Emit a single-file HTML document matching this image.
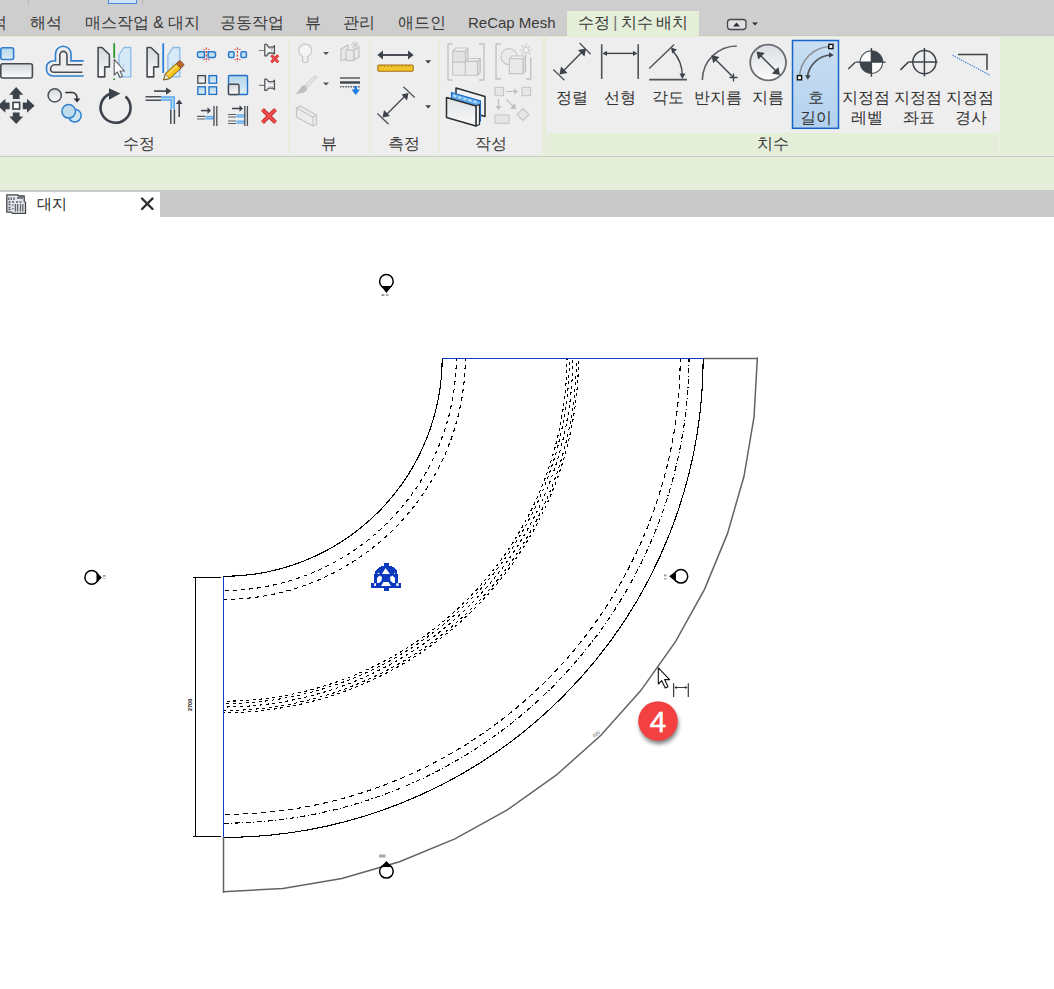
<!DOCTYPE html>
<html><head><meta charset="utf-8">
<style>
*{margin:0;padding:0;box-sizing:border-box}
html,body{width:1054px;height:989px;overflow:hidden;background:#fff;font-family:"Liberation Sans",sans-serif;color:#333}
.abs{position:absolute}
#top{left:0;top:0;width:1054px;height:36px;background:#cecece;border-bottom:1px solid #c8c8c8}
.tab{position:absolute;top:12.5px;font-size:15.6px;color:#3a3a3a;white-space:nowrap;line-height:20px}
#ribbon{left:0;top:36px;width:1054px;height:120px;background:#e4eed8}
.panel{position:absolute;top:1px;height:118px;background:#eeeeee}
.ptitle{position:absolute;font-size:15.5px;color:#3c3c3c;white-space:nowrap;line-height:18px;width:100px;text-align:center}
#rline{left:0;top:156px;width:1054px;height:1px;background:#cbcbcb}
#opts{left:0;top:157px;width:1054px;height:33px;background:#e4eed8}
#tabbar{left:0;top:190px;width:1054px;height:27px;background:#cacaca}
#doctab{left:0;top:192px;width:160px;height:25px;background:#fff}
.bt{position:absolute;font-size:15.5px;color:#333;white-space:nowrap;line-height:20px;text-align:center;width:60px}
</style></head>
<body>
<div id="top" class="abs">
  <div class="abs" style="left:28px;top:0;width:1px;height:5px;background:#b8b8b8"></div>
  <div class="abs" style="left:108px;top:0;width:29px;height:4px;background:#cfe3f7;border:1px solid #4a8ad6;border-top:none"></div>
  <div class="abs" style="left:142px;top:0;width:1px;height:5px;background:#b8b8b8"></div>
  <div class="tab" style="left:-9px">석</div>
  <div class="tab" style="left:30px">해석</div>
  <div class="tab" style="left:85px">매스작업 &amp; 대지</div>
  <div class="tab" style="left:220px">공동작업</div>
  <div class="tab" style="left:305px">뷰</div>
  <div class="tab" style="left:343px">관리</div>
  <div class="tab" style="left:398px">애드인</div>
  <div class="tab" style="left:468px;font-size:15px">ReCap Mesh</div>
  <div class="abs" style="left:567px;top:11px;width:132px;height:25px;background:#e4eed8"></div>
  <div class="tab" style="left:578px;letter-spacing:-0.35px">수정 <span style="color:#6e6e6e">|</span> 치수 배치</div>
</div>
<div id="ribbon" class="abs">
  <div class="panel" style="left:0;width:288px"></div>
  <div class="panel" style="left:289px;width:80px"></div>
  <div class="panel" style="left:370px;width:69px"></div>
  <div class="panel" style="left:440px;width:102px"></div>
  <div class="panel" style="left:546px;width:1px;background:#ececec"></div>
  <div class="panel" style="left:547px;width:453px;height:96px"></div>
  <div class="panel" style="left:999px;top:97px;width:1px;height:22px;background:#eaf0e2"></div>
  <div class="ptitle" style="left:88.7px;top:99px">수정</div>
  <div class="ptitle" style="left:279.2px;top:99px">뷰</div>
  <div class="ptitle" style="left:353.9px;top:99px">측정</div>
  <div class="ptitle" style="left:440.5px;top:99px">작성</div>
  <div class="ptitle" style="left:723px;top:99px">치수</div>
</div>
<div id="rline" class="abs"></div>
<div id="opts" class="abs"></div>
<div id="tabbar" class="abs"></div>
<div id="doctab" class="abs">
  <div class="abs" style="left:37px;top:2px;font-size:15px;color:#222;line-height:20px">대지</div>
</div>
<svg class="abs" style="left:0;top:0" width="1054" height="220" viewBox="0 0 1054 220">
 <defs>
  <linearGradient id="gg" x1="0" y1="0" x2="0" y2="1"><stop offset="0" stop-color="#d3d7dc"/><stop offset="1" stop-color="#fbfbfb"/></linearGradient>
  <linearGradient id="bg" x1="0" y1="0" x2="0" y2="1"><stop offset="0" stop-color="#b3d6ea"/><stop offset="1" stop-color="#dcedf7"/></linearGradient>
  <linearGradient id="selg" x1="0" y1="0" x2="0" y2="1"><stop offset="0" stop-color="#c4dcf3"/><stop offset="1" stop-color="#b5d3ef"/></linearGradient>
  <linearGradient id="dg" x1="0" y1="0" x2="0" y2="1"><stop offset="0" stop-color="#dfe1e4"/><stop offset="1" stop-color="#fafafa"/></linearGradient>
 </defs>
 <!-- Icon1 align (cut) -->
 <rect x="0.8" y="47.8" width="12.8" height="11.7" rx="2" fill="url(#bg)" stroke="#2f7fd0" stroke-width="1.6"/>
 <rect x="0.8" y="63.8" width="31.6" height="14.2" rx="2" fill="url(#gg)" stroke="#454a50" stroke-width="1.6"/>
 <!-- Icon2 offset -->
 <path d="M83.7 60.9 H71 V54 A7.7 7.7 0 0 0 55.5 54 V61 H53 A6.5 6.5 0 0 0 46.5 67.5 V69.5 A6.5 6.5 0 0 0 53 76 H83.7" fill="none" stroke="#2f7fd0" stroke-width="1.6"/>
 <path d="M82.4 64.8 H67 V55 A3.6 3.6 0 0 0 59.8 55 V64.8 H55 A4.5 4.5 0 0 0 50.5 69 A3.5 3.5 0 0 0 54 72.3 H82.4" fill="none" stroke="#4a4e55" stroke-width="1.6"/>
 <!-- Icon3 mirror pick -->
 <path d="M98.1 47.5 H102 L109.4 54.6 V66.9 H104.7 V76.9 H98.1 Z" fill="url(#gg)" stroke="#474b52" stroke-width="1.6" stroke-linejoin="round"/>
 <path d="M130.8 47.5 H124 L118.9 55 V76.9 H130.8 Z" fill="#d6e9f6" stroke="#8bbbe8" stroke-width="1.3" stroke-linejoin="round"/><path d="M123.7 63.5 V67" stroke="#a8ccee" stroke-width="1"/>
 <path d="M114.2 43.2 V58" stroke="#2e9a2e" stroke-width="1.8"/>
 <circle cx="114.2" cy="79.3" r="1" fill="#2e9a2e"/>
 <path d="M114.2 59.3 V75 L117.4 72 L120 77.5 L122.5 76.3 L120 71 H124.5 Z" fill="#fdfdfd" stroke="#5b5f66" stroke-width="1.1" stroke-linejoin="round"/>
 <!-- Icon7 mirror draw -->
 <path d="M147.1 47.5 H151 L158.4 54.6 V66.9 H153.7 V76.9 H147.1 Z" fill="url(#gg)" stroke="#474b52" stroke-width="1.6" stroke-linejoin="round"/>
 <path d="M179.8 47.5 H173 L167.9 55 V76.9 H179.8 Z" fill="#d6e9f6" stroke="#8bbbe8" stroke-width="1.3" stroke-linejoin="round"/><path d="M172.7 63.5 V67" stroke="#a8ccee" stroke-width="1"/>
 <path d="M163.2 43.2 V73" stroke="#2a7fdc" stroke-width="1.8"/>
 <g transform="translate(163.5,80) rotate(-43)">
  <path d="M0 0 L5.5 -3.3 H21 V3.3 H5.5 Z" fill="#f6c21a" stroke="#6d5a20" stroke-width="0.9"/>
  <path d="M6 -1 H20.5" stroke="#fbe27a" stroke-width="1.2"/>
  <path d="M0.6 0 L5.5 -3 V3 Z" fill="#f4efe0" stroke="#6d5a20" stroke-width="0.6"/>
  <rect x="20.5" y="-3.3" width="5" height="6.6" rx="1.2" fill="#b9652c" stroke="#7a4a25" stroke-width="0.8"/>
 </g>
 <!-- Icon4 move -->
 <g fill="#3d434a">
  <path d="M16.2 87 L23.2 94.7 H19.6 V99 H12.8 V94.7 H9.2 Z"/>
  <path d="M16.2 124.1 L23.2 116.4 H19.6 V112.5 H12.8 V116.4 H9.2 Z"/>
  <path d="M34.6 105.8 L27 98.8 V102.4 H22.8 V109.2 H27 V112.8 Z"/>
  <path d="M-2.2 105.8 L5.4 98.8 V102.4 H9.6 V109.2 H5.4 V112.8 Z"/>
 </g>
 <rect x="13" y="102.4" width="6.6" height="6.6" fill="#fff" stroke="#3d434a" stroke-width="1.6"/>
 <!-- Icon5 copy -->
 <circle cx="54.7" cy="95.4" r="6.6" fill="url(#gg)" stroke="#4a4e55" stroke-width="1.5"/>
 <path d="M65.3 92.5 H72 A5 5 0 0 1 77 97.5 V99" fill="none" stroke="#2b2f35" stroke-width="1.5"/>
 <path d="M73.5 98.5 H80.5 L77 102.5 Z" fill="#2b2f35"/>
 <circle cx="74.7" cy="115.6" r="6.4" fill="#cfe5f2" stroke="#2f7fd0" stroke-width="1.5"/>
 <circle cx="68.7" cy="111.3" r="6.8" fill="#c0dcec" stroke="#2f7fd0" stroke-width="1.5"/>
 <!-- Icon6 rotate -->
 <path d="M125.5 96.5 A15 15 0 1 1 109.5 94" fill="none" stroke="#3d434a" stroke-width="2.6"/>
 <path d="M109 88.3 V99.7 L120.4 93.5 Z" fill="#3d434a"/>
 <!-- Icon8 trim corner -->
 <path d="M145.5 96.8 H161 M145.5 100.2 H161" stroke="#4a4e55" stroke-width="1.6"/>
 <path d="M161 98.5 H172.7 V109" fill="none" stroke="#5aa8f0" stroke-width="4.5"/>
 <path d="M161 98.5 H172.7 V109" fill="none" stroke="#b0d8ee" stroke-width="1.6"/>
 <path d="M170.8 109.5 V124 M174.4 109.5 V124" stroke="#4a4e55" stroke-width="1.5"/>
 <path d="M154 91.1 H167" stroke="#3d434a" stroke-width="1.6"/>
 <path d="M166 87.5 L171.5 91.1 L166 94.7 Z" fill="#3d434a"/>
 <path d="M179.2 117 V103" stroke="#3d434a" stroke-width="1.5"/>
 <path d="M175.8 104 L179.2 99.5 L182.6 104 Z" fill="#3d434a"/>
 <!-- Small icons col1 -->
 <path d="M204.4 51.8 H199.5 A2 2 0 0 0 197.5 53.8 V55.4 A2 2 0 0 0 199.5 57.4 H204.4 Z M208.2 51.8 H213.5 A2 2 0 0 1 215.5 53.8 V55.4 A2 2 0 0 1 213.5 57.4 H208.2 Z" fill="#c2e2f2" stroke="#2a78cc" stroke-width="1.5"/>
 <path d="M206.3 47.5 V62" stroke="#d02a2a" stroke-width="1.1" stroke-dasharray="2 1.5"/>
 <path d="M203.2 49.4 H204.8 M207.8 49.4 H209.6 M203.2 59.6 H204.8 M207.8 59.6 H209.6" stroke="#d84a4a" stroke-width="0.9"/>
 <rect x="197.8" y="75.6" width="7.6" height="7.6" fill="url(#gg)" stroke="#454a50" stroke-width="1.3"/>
 <rect x="209" y="75.6" width="7.6" height="7.6" fill="url(#bg)" stroke="#2070c8" stroke-width="1.3"/>
 <rect x="197.8" y="86.8" width="7.6" height="7.6" fill="url(#bg)" stroke="#2070c8" stroke-width="1.3"/>
 <rect x="209" y="86.8" width="7.6" height="7.6" fill="url(#bg)" stroke="#2070c8" stroke-width="1.3"/>
 <path d="M201 110.6 H208" stroke="#3d434a" stroke-width="1.5"/>
 <path d="M207.5 107.3 L211 110.6 L207.5 113.9 Z" fill="#3d434a"/>
 <path d="M197 116.4 H205 M197 119 H205" stroke="#5a5e64" stroke-width="1.2"/>
 <path d="M205.5 117.7 H214" stroke="#5aa8f0" stroke-width="3.6"/><path d="M206 117.7 H213.5" stroke="#a8d4f2" stroke-width="1"/>
 <path d="M214 106 V126 M216.8 106 V126" stroke="#4a4e55" stroke-width="1.3"/>
 <!-- col2 -->
 <rect x="228.6" y="51.8" width="5.4" height="5.6" rx="1.2" fill="#c2e2f2" stroke="#2a78cc" stroke-width="1.5"/>
 <rect x="241" y="51.8" width="5.4" height="5.6" rx="1.2" fill="#c2e2f2" stroke="#2a78cc" stroke-width="1.5"/>
 <path d="M237.4 47.5 V62" stroke="#d02a2a" stroke-width="1.1" stroke-dasharray="2 1.5"/>
 <path d="M234.3 49.4 H235.9 M238.9 49.4 H240.7 M234.3 59.6 H235.9 M238.9 59.6 H240.7" stroke="#d84a4a" stroke-width="0.9"/>
 <rect x="228.5" y="75.5" width="19" height="19" rx="1" fill="url(#bg)" stroke="#2070c8" stroke-width="1.4"/>
 <rect x="228.5" y="84.3" width="10.5" height="10.2" rx="1" fill="url(#gg)" stroke="#454a50" stroke-width="1.4"/>
 <path d="M232 108.5 H240" stroke="#3d434a" stroke-width="1.5"/>
 <path d="M239.5 105.2 L243 108.5 L239.5 111.8 Z" fill="#3d434a"/>
 <path d="M228 114.5 H236 M228 117 H236 M228 121 H236 M228 123.5 H236" stroke="#5a5e64" stroke-width="1.1"/>
 <path d="M236.5 115.8 H245 M236.5 122.2 H245" stroke="#5aa8f0" stroke-width="3.2"/><path d="M237 115.8 H244.5 M237 122.2 H244.5" stroke="#a8d4f2" stroke-width="0.9"/>
 <path d="M244.8 106 V126 M247.4 106 V126" stroke="#4a4e55" stroke-width="1.3"/>
 <!-- col3 pins -->
 <path d="M259 50.5 H264.8 M259 85.3 H264.8" stroke="#7a7e84" stroke-width="1.2"/>
 <path d="M264.8 44.4 H266.6 L268.6 47.1 H273 L274.4 45.6 V54 L273 53 H268.6 L266.6 55.8 H264.8 Z" fill="#f4f4f4" stroke="#50545a" stroke-width="1.3" stroke-linejoin="round"/>
 <path d="M268.6 48.5 H273 M271.8 48 V52.5" stroke="#b5b8bc" stroke-width="1"/>
 <path d="M271.3 55.3 L278.2 62.2 M278.2 55.3 L271.3 62.2" stroke="#c83030" stroke-width="3"/>
 <path d="M271.3 55.3 L278.2 62.2 M278.2 55.3 L271.3 62.2" stroke="#ec4a4a" stroke-width="1.8"/>
 <path d="M264.8 79.2 H266.6 L268.6 81.6 H273 L274.4 80.2 V89.6 L273 88.1 H268.6 L266.6 90.4 H264.8 Z" fill="#f4f4f4" stroke="#50545a" stroke-width="1.3" stroke-linejoin="round"/>
 <path d="M268.6 83 H273 M268.6 86.8 H273" stroke="#b5b8bc" stroke-width="1"/>
 <path d="M262.5 109.5 L275.5 122.5 M275.5 109.5 L262.5 122.5" stroke="#c42a2a" stroke-width="4"/>
 <path d="M262.5 109.5 L275.5 122.5 M275.5 109.5 L262.5 122.5" stroke="#f25050" stroke-width="2.4"/>
 <!-- View panel (disabled) -->
 <circle cx="305.2" cy="50.6" r="6.5" fill="#f4f4f4" stroke="#c8c8c8" stroke-width="1.2"/>
 <path d="M302.6 56 V61.5 Q305.2 63.5 307.8 61.5 V56" fill="#f0f0f0" stroke="#c4c4c4" stroke-width="1.1"/>
 <path d="M323 52 H329 L326 55 Z M323 82.6 H329 L326 85.6 Z" fill="#555"/>
 <g fill="#e8e8e8" stroke="#c0c0c0" stroke-width="1.1">
  <path d="M341 49 L348 45 V58 L341 61 Z"/>
  <rect x="346" y="50" width="8" height="10.5"/>
  <path d="M354 50 L359 47 V57 L354 60 Z"/>
 </g>
 <path d="M355 41 V49 M351 45 H359 M352 42 L358 48 M358 42 L352 48" stroke="#c8c8c8" stroke-width="1"/>
 <path d="M295.5 93.5 Q298 92 300 89 Q301.5 85.5 304 85 L307.5 88.5 Q307 91 303.5 92.5 Q300 94 295.5 93.5 Z" fill="#bdbdbd"/>
 <path d="M305 85.5 L314 76.5 Q316 75.5 317 77 L308 86.5 Z" fill="#ebebeb" stroke="#c4c4c4" stroke-width="1"/>
 <path d="M340 78 H360" stroke="#5f636a" stroke-width="1.6"/>
 <path d="M340 82.5 H360" stroke="#3d434a" stroke-width="2.4"/>
 <path d="M340 86.8 H360" stroke="#5f636a" stroke-width="1.4" stroke-dasharray="1.6 1"/>
 <path d="M355.7 86 V90" stroke="#1e7ae0" stroke-width="2.6"/>
 <path d="M351.5 89.5 H360 L355.7 95 Z" fill="#1e7ae0"/>
 <g fill="#ececec" stroke="#c4c4c4" stroke-width="1.1">
  <path d="M296.5 108 L300 106 L316.5 115 V124 L313 126 L296.5 117 Z"/>
  <path d="M296.5 108 L313 117 V126 M313 117 L316.5 115" fill="none"/>
 </g>
 <!-- Measure panel -->
 <path d="M381 55 H410" stroke="#4a4e55" stroke-width="2"/>
 <path d="M377.3 55 L383 50.6 V59.4 Z M413.6 55 L408 50.6 V59.4 Z" fill="#3d434a"/>
 <rect x="377.8" y="65" width="35.4" height="6.3" rx="1.2" fill="#f2c42a" stroke="#a66e16" stroke-width="1.1"/>
 <path d="M381 65.5 V67 M384.5 65.5 V67 M388 65.5 V67 M391.5 65.5 V67 M395 65.5 V67 M398.5 65.5 V67 M402 65.5 V67 M405.5 65.5 V67 M409 65.5 V67" stroke="#b07a20" stroke-width="0.8"/>
 <path d="M425.2 60.2 H431.2 L428.2 63.4 Z M425.2 105.3 H431.2 L428.2 108.5 Z" fill="#3d434a"/>
 <path d="M384.5 116.5 L407 94" stroke="#4a4e55" stroke-width="1.5"/>
 <path d="M377.4 113.5 L388.6 124.2 M403.4 86.8 L414.7 97.5" stroke="#4a4e55" stroke-width="1.2"/>
 <path d="M382.5 117.5 L384 110 L390 116 Z M408.5 93 L401.5 94.5 L407 100.5 Z" fill="#3d434a"/>
 <!-- Create panel (disabled mostly) -->
 <g fill="none" stroke="#c2c2c2" stroke-width="1.4">
  <path d="M452.7 44 H448 V80 H452.7 M479 44 H484 V80 H479"/>
  <path d="M501 44 H496 V79 H501 M530.8 57 V79 H526"/>
 </g>
 <g fill="#e9e9e9" stroke="#c4c4c4" stroke-width="1.1" stroke-linejoin="round">
  <path d="M452.7 51.3 L456 48 H468 L465.4 51.3 Z" fill="#f2f2f2"/>
  <path d="M465.4 51.3 L468 48 V59 L465.4 62 Z" fill="#dcdcdc"/>
  <rect x="452.7" y="51.3" width="12.7" height="11" fill="#e2e2e2"/>
  <rect x="452.7" y="62.3" width="12.7" height="13"/>
  <path d="M465.4 61.4 L468.5 58.5 H480.3 L477.5 61.4 Z" fill="#f2f2f2"/>
  <path d="M477.5 61.4 L480.3 58.5 V72.5 L477.5 75.3 Z" fill="#dcdcdc"/>
  <rect x="465.4" y="61.4" width="12.1" height="13.9"/>
 </g>
 <circle cx="509" cy="56.6" r="8" fill="#ebebeb" stroke="#c6c6c6" stroke-width="1.1"/>
 <g fill="#e9e9e9" stroke="#c4c4c4" stroke-width="1.1" stroke-linejoin="round">
  <path d="M509.4 58.8 L512 56 H525.6 L523 58.8 Z" fill="#f2f2f2"/>
  <path d="M523 58.8 L525.6 56 V70.8 L523 73.6 Z" fill="#dcdcdc"/>
  <rect x="509.4" y="58.8" width="13.6" height="14.8"/>
 </g>
 <path d="M526 43.5 V56.5 M519.5 50 H532.5 M521.4 45.4 L530.6 54.6 M530.6 45.4 L521.4 54.6" stroke="#d2d2d2" stroke-width="1.2"/>
 <circle cx="526" cy="50" r="2.6" fill="#f4f4f4" stroke="#cfcfcf" stroke-width="1"/>
 <path d="M456 88 L485 96.5 V116.5 L456 108 Z" fill="#f2f3f5" stroke="#2b2f35" stroke-width="1.5" stroke-linejoin="round"/>
 <path d="M451.5 92.5 L480.5 101 V121 L451.5 112.5 Z" fill="#5aa6ea" stroke="#1a6ac8" stroke-width="1.1"/>
 <path d="M453 95.5 L479 103" stroke="#b8def5" stroke-width="2.2" stroke-dasharray="3.5 1.8"/>
 <path d="M476 106 L479.5 104.5 V124.5 L476 126 Z" fill="#f8f8f8" stroke="#2b2f35" stroke-width="1.3" stroke-linejoin="round"/>
 <path d="M446.5 97.5 L476 106 V126 L446.5 117.5 Z" fill="url(#dg)" stroke="#2b2f35" stroke-width="1.5" stroke-linejoin="round"/>
 <g fill="#e6e6e6" stroke="#c6c6c6" stroke-width="1.1">
  <rect x="495" y="87.3" width="8.6" height="8.4"/>
  <rect x="522" y="87.3" width="8.6" height="8.4"/>
  <rect x="495" y="115" width="14" height="8.3"/>
  <path d="M523 108.5 L529 114.5 L523 120.5 L517 114.5 Z"/>
 </g>
 <path d="M506 91.5 H515 M498.5 99 V107 M506.5 99.5 L513 106" stroke="#bfbfbf" stroke-width="1.2"/>
 <path d="M514 88.5 L518 91.5 L514 94.5 Z M495.5 106 H501.5 L498.5 110 Z M510 108.5 L516 109 L515 103 Z" fill="#bfbfbf"/>
</svg>
<svg class="abs" style="left:0;top:0" width="1054" height="220" viewBox="0 0 1054 220">
 <rect x="792.5" y="40.5" width="46" height="87.8" fill="url(#selg2)" stroke="#1564c8" stroke-width="1.5"/>
 <defs>
  <linearGradient id="selg2" x1="0" y1="0" x2="0" y2="1"><stop offset="0" stop-color="#c8def3"/><stop offset="1" stop-color="#b4d2ee"/></linearGradient>
  <linearGradient id="cg" x1="0" y1="0" x2="0" y2="1"><stop offset="0" stop-color="#dcdee2"/><stop offset="1" stop-color="#fafafa"/></linearGradient>
 </defs>
 <!-- aligned -->
 <path d="M563.5 70.8 L582 52" stroke="#4a4e55" stroke-width="1.5"/>
 <path d="M553.3 69.5 L564.4 80.2 M579.6 43 L590.6 54.2" stroke="#4f535a" stroke-width="1.3"/>
 <path d="M559.5 74.5 L561 66.5 L567.5 73 Z M586 48.5 L578 50 L584.5 56.5 Z" fill="#3d434a"/>
 <!-- linear -->
 <path d="M601.7 44.2 V79 M638.2 44.2 V79" stroke="#4f535a" stroke-width="1.6"/>
 <path d="M604 53.4 H636" stroke="#3d434a" stroke-width="1.4"/>
 <path d="M602.5 53.4 L607 50.8 V56 Z M637.4 53.4 L633 50.8 V56 Z" fill="#3d434a"/>
 <!-- angular -->
 <path d="M649.2 68.6 L674.2 44.4" stroke="#4f535a" stroke-width="1.4"/>
 <path d="M649.2 79.7 H687" stroke="#4f535a" stroke-width="1.8"/>
 <path d="M672 50 A38 38 0 0 1 682.3 77" fill="none" stroke="#3d434a" stroke-width="1.4"/>
 <path d="M671 47.5 L677 49.5 L672.2 53.5 Z M682.4 79 L679.5 73.5 H685.5 Z" fill="#3d434a"/>
 <!-- radial -->
 <path d="M702.3 80 A34.5 34.5 0 0 1 736.8 46" fill="none" stroke="#5d6168" stroke-width="1.6"/>
 <path d="M713 57 L733 77" stroke="#3d434a" stroke-width="1.4"/>
 <path d="M711.5 55.3 L719.5 57 L713.2 63.3 Z" fill="#3d434a"/>
 <path d="M733.5 73.5 V81.5 M729.5 77.5 H737.5" stroke="#3d434a" stroke-width="1.3"/>
 <!-- diameter -->
 <circle cx="768.1" cy="62.5" r="17.9" fill="url(#cg)" stroke="#6a6d72" stroke-width="1.8"/>
 <path d="M759 54 L777 72" stroke="#3d434a" stroke-width="1.4"/>
 <path d="M756.5 51.5 L764.8 53 L758.2 59.5 Z M780 75 L771.8 73.5 L778.4 67 Z" fill="#3d434a"/>
 <!-- arc length -->
 <path d="M799.6 78 A31.5 31.5 0 0 1 830.9 46.5" fill="none" stroke="#8a8d92" stroke-width="1.5"/>
 <path d="M807.5 76 A25 25 0 0 1 831 55" fill="none" stroke="#4f535a" stroke-width="1.6"/>
 <path d="M833.8 55 L829 52.2 V57.8 Z M807.8 79.8 L805 75.2 H810.6 Z" fill="#3d434a"/>
 <rect x="797.4" y="75.6" width="4.2" height="4.2" fill="#fff" stroke="#111" stroke-width="1.4"/>
 <rect x="828.8" y="44.4" width="4.2" height="4.2" fill="#fff" stroke="#111" stroke-width="1.4"/>
 <!-- spot elevation -->
 <circle cx="871.4" cy="62.1" r="11.3" fill="#fbfbfb" stroke="#5a5e64" stroke-width="1.2"/>
 <path d="M871.4 62.1 V50.8 A11.3 11.3 0 0 1 882.7 62.1 Z M871.4 62.1 V73.4 A11.3 11.3 0 0 1 860.1 62.1 Z" fill="#3d434a"/>
 <path d="M871.4 48 V76.7 M856 62.1 H885.7 M848.2 68.9 L855.5 62.1" stroke="#3d434a" stroke-width="1.4"/>
 <!-- spot coordinate -->
 <circle cx="924.4" cy="62.1" r="11.6" fill="none" stroke="#3d434a" stroke-width="1.5"/>
 <path d="M924.4 48 V76.6 M908.3 62.1 H937.5 M900.4 69.9 L908.3 62.1" stroke="#3d434a" stroke-width="1.5"/>
 <!-- spot slope -->
 <path d="M958 54.6 H987 V70" fill="none" stroke="#3d434a" stroke-width="1.5"/>
 <path d="M952.6 55.3 L989.7 75.1" stroke="#3a7fd5" stroke-width="1.3" stroke-dasharray="1.2 1.2"/>
 <!-- top bar mini icon -->
 <rect x="727.5" y="19.5" width="18.5" height="10" rx="3" fill="#e0e0e0" stroke="#45494f" stroke-width="1.3"/>
 <path d="M733 26.5 H740 L736.5 22.5 Z" fill="#2b2f35"/>
 <path d="M752 22.5 H758 L755 25.5 Z" fill="#2b2f35"/>
 <!-- doc tab icon -->
 <path d="M6.8 194.8 H17.5 L18.6 196 H24.2 V201.5 L25.5 202.2 V213.4 H12.5 L11.5 212.2 H6.8 Z" fill="#e2e5ea" stroke="#3f444b" stroke-width="1.3" stroke-linejoin="round"/>
 <path d="M8.8 197.5 V200 M11.2 197.5 V200 M14 197.5 V200 M17 198 H23 M8.5 202 H10.5 M12 202 H14 M16 202 H18 M19.5 202 H21.5 M8.5 204.5 H10.5 M8.5 207.5 H10.5 M8.5 209.5 H10.5" stroke="#555a61" stroke-width="1.3"/>
 <path d="M15.4 204 V211.5 M17.6 204 V211.5 M20.5 204 V211.5 M22.8 204 V211.5 M12.8 204.5 V206 M12.8 208 V209.5" stroke="#5f646b" stroke-width="1.3"/>
 <path d="M142 198.5 L152.5 209 M152.5 198.5 L142 209" stroke="#2e2e2e" stroke-width="2.4" stroke-linecap="round"/>
</svg>
<div class="bt" style="left:541.6px;top:87.5px">정렬</div>
<div class="bt" style="left:589.6px;top:87.5px">선형</div>
<div class="bt" style="left:637.8px;top:87.5px">각도</div>
<div class="bt" style="left:687.5px;top:87.5px">반지름</div>
<div class="bt" style="left:738.0px;top:87.5px">지름</div>
<div class="bt" style="left:786.3px;top:87.5px">호</div>
<div class="bt" style="left:786.0px;top:107.5px">길이</div>
<div class="bt" style="left:835.9px;top:87.5px">지정점</div>
<div class="bt" style="left:837.0px;top:107.5px">레벨</div>
<div class="bt" style="left:887.9px;top:87.5px">지정점</div>
<div class="bt" style="left:888.7px;top:107.5px">좌표</div>
<div class="bt" style="left:940.2px;top:87.5px">지정점</div>
<div class="bt" style="left:941.4px;top:107.5px">경사</div>
<svg class="abs" style="left:0;top:216px" width="1054" height="773" viewBox="0 216 1054 773">
 <defs><clipPath id="cl"><rect x="223" y="358" width="600" height="600"/></clipPath></defs>
 <g fill="none" stroke="#000" stroke-width="1.1" shape-rendering="crispEdges" clip-path="url(#cl)">
  <path d="M442.2 357.4 A219 219 0 0 1 223.2 576.4"/>
  <path d="M703.2 357.4 A480 480 0 0 1 223.2 837.4"/>
  <path d="M456.3 357.4 A233.1 233.1 0 0 1 223.2 590.5" stroke-dasharray="4 4"/>
  <path d="M465.3 357.4 A242.1 242.1 0 0 1 223.2 599.5" stroke-dasharray="4 4"/>
  <path d="M567.0 357.4 A343.8 343.8 0 0 1 223.2 701.2" stroke-dasharray="3 3.5" stroke-dashoffset="0"/>
  <path d="M569.4 357.4 A346.2 346.2 0 0 1 223.2 703.6" stroke-dasharray="3 3.5" stroke-dashoffset="2"/>
  <path d="M572.8 357.4 A349.6 349.6 0 0 1 223.2 707.0" stroke-dasharray="3 3.5" stroke-dashoffset="4"/>
  <path d="M576.4 357.4 A353.2 353.2 0 0 1 223.2 710.6" stroke-dasharray="3 3.5" stroke-dashoffset="1"/>
  <path d="M578.5 357.4 A355.3 355.3 0 0 1 223.2 712.7" stroke-dasharray="3 3.5" stroke-dashoffset="3"/>
  <path d="M680.2 357.4 A457 457 0 0 1 223.2 814.4" stroke-dasharray="5 4"/>
  <path d="M689.0 357.4 A465.8 465.8 0 0 1 223.2 823.2" stroke-dasharray="5 2.5 1 2.5"/>
 </g>
 <path d="M195.5 577.5 V836.5 M193 577.5 H221 M193 836.5 H221" fill="none" stroke="#000" stroke-width="1.1" shape-rendering="crispEdges"/>
 <path d="M757.4 357.4 L754.0 417.2 L744.0 476.3 L727.4 533.9 L704.5 589.3 L675.5 641.7 L640.8 690.6 L600.9 735.3 L556.2 775.2 L507.3 809.9 L454.9 838.9 L399.5 861.8 L341.9 878.4 L282.8 888.4 L223.0 891.8" fill="none" stroke="#636363" stroke-width="1.5"/>
 <path d="M703.5 358.5 H757.5 M223.5 837 V893" fill="none" stroke="#636363" stroke-width="1.5"/>
 <path d="M442 358.5 H703.5 M223.5 577 V837" fill="none" stroke="#0a3cc8" stroke-width="1" shape-rendering="crispEdges"/>
 <!-- markers -->
 <g fill="#fff" stroke="#000" stroke-width="1.5">
  <circle cx="386.4" cy="281.4" r="6.8"/>
  <circle cx="91.7" cy="577.4" r="6.8"/>
  <circle cx="680.9" cy="576.3" r="6.8"/>
  <circle cx="386.4" cy="871.3" r="6.8" fill="none"/>
 </g>
 <path d="M381 286 H392 L386.4 293 Z M96.5 572 V583 L101.8 577.4 Z M676 571 V582 L669.2 576.3 Z M381 867 H392 L386.4 861 Z" fill="#000"/>
 <path d="M378 896 Z" />
 <!-- blue site icon -->
 <g transform="translate(386,577)" fill="#0a3ac0" shape-rendering="crispEdges">
  <path d="M-2 -13.9 H2.9 V-11.5 L7 -10 L10.5 -6.5 L12 -1 V5.9 H14.9 V10.8 H2.9 V13.8 H-2 V10.8 H-14.9 V5.9 H-12 V-1 L-10.5 -6.5 L-7 -10 L-2 -11.5 Z"/>
 </g>
 <g transform="translate(386,577)" fill="#fff">
  <path d="M-4 -3 L-0.5 -9 L3.9 -3 Z"/>
  <path d="M-9 5.9 V1 L-6.5 -1.5 L-4 0 L-4.5 4 L-7 5.9 Z"/>
  <path d="M9 5.9 V1 L6.5 -1.5 L4 0 L4.5 4 L7 5.9 Z"/>
  <path d="M-5 8.9 L-2.5 5.1 H2.5 L4.9 8.9 Z"/>
  <rect x="-11.9" y="6.3" width="1.9" height="2.6"/>
  <rect x="10.2" y="6.3" width="2.5" height="2.6"/>
  <rect x="-8.5" y="-4.2" width="2" height="1"/>
  <rect x="8" y="-4.2" width="1.2" height="1"/>
 </g>
 <!-- cursor -->
 <path d="M658.3 667.8 V684 L661.7 680.7 L665.3 688 L668 686.7 L664.6 679.6 H669.6 Z" fill="#fff" stroke="#111" stroke-width="1.1" stroke-linejoin="round"/>
 <path d="M673.6 683.2 V697 M688.3 683.2 V697" stroke="#3a3a3a" stroke-width="1.2"/>
 <path d="M675 687.5 H687" stroke="#3a3a3a" stroke-width="1"/>
 <path d="M674.2 687.5 L677 686 V689 Z M687.7 687.5 L685 686 V689 Z" fill="#3a3a3a"/>
 <text x="0" y="0" transform="translate(191.5,711) rotate(-90)" font-family="Liberation Sans" font-size="5.5" font-weight="bold" fill="#111">2700</text>
 <text x="0" y="0" transform="translate(594,738) rotate(-40)" font-family="Liberation Sans" font-size="5" fill="#777">480</text>
  <rect x="381.5" y="294" width="3" height="2" fill="#9a9a9a"/><rect x="386" y="294" width="2.5" height="2" fill="#aaa"/>
 <rect x="103" y="575" width="2.5" height="1.8" fill="#9a9a9a"/><rect x="103" y="578" width="2.5" height="1" fill="#bbb"/>
 <rect x="664" y="574.5" width="2.5" height="1.8" fill="#9a9a9a"/><rect x="664" y="578" width="2.5" height="1.5" fill="#aaa"/>
 <rect x="379" y="854.5" width="6.5" height="3" fill="#aaa"/>
 <!-- badge -->
 <defs><filter id="sh" x="-50%" y="-50%" width="200%" height="200%"><feGaussianBlur stdDeviation="2"/></filter></defs>
 <circle cx="659" cy="724.5" r="19.5" fill="#000" opacity="0.5" filter="url(#sh)"/>
 <circle cx="658" cy="721" r="19.8" fill="#f34141"/>
 <text x="658" y="731.5" text-anchor="middle" font-family="Liberation Sans" font-size="29.5" fill="#fff" stroke="#fff" stroke-width="0.5">4</text>
</svg>
</body></html>
